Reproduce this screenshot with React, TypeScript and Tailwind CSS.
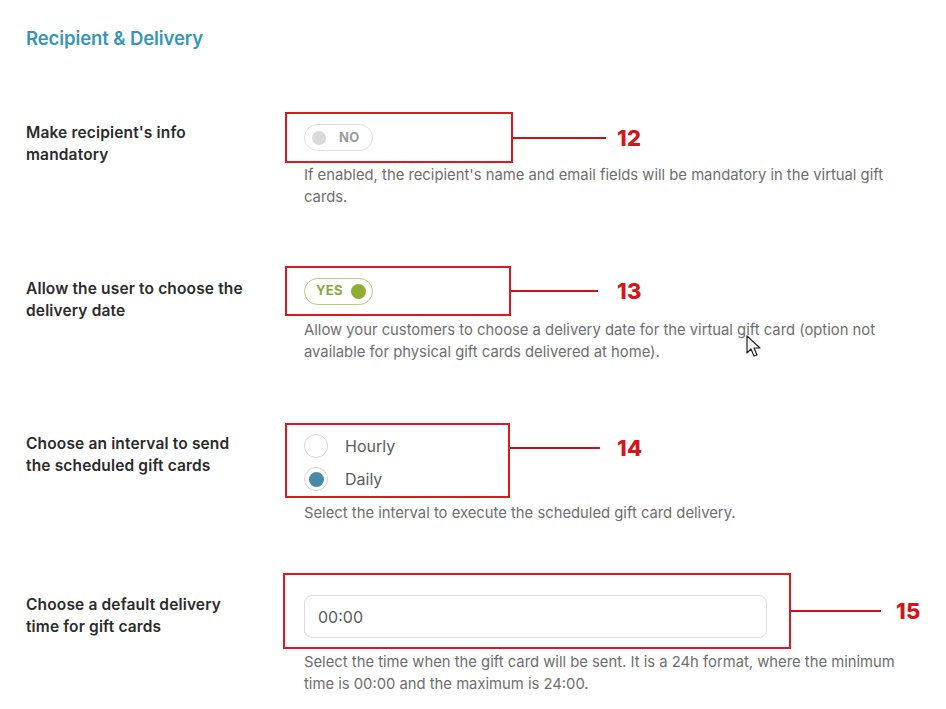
import React from "react";

const RED = "border-[#e1161e]";

function Callout({ n, lineW, gap, className = "" }: { n: string; lineW: number; gap: number; className?: string }) {
  return (
    <div className={`flex items-center ${className}`}>
      <div className="h-[2px] bg-[#c8101a]" style={{ width: lineW, marginRight: gap }} />
      <div className="text-[22px] font-extrabold text-[#d6141c] leading-none tracking-[0.3px]">{n}</div>
    </div>
  );
}

const LABEL = "text-[15.5px] font-semibold leading-[22px] text-[#2b2b2b] tracking-[0.15px]";
const DESC = "w-[600px] text-[14.8px] leading-[22px] text-[#6e6e6e]";

export default function App() {
  return (
    <div
      className="relative w-[946px] h-[709px] bg-white pl-[26px] pt-[26px] overflow-hidden"
      style={{ fontFamily: "Inter, 'Open Sans', sans-serif" }}
    >
      <h2 className="text-[18.5px] font-semibold leading-[24px] text-[#3596bd] tracking-[-0.1px]">
        Recipient &amp; Delivery
      </h2>

      {/* Row 1 */}
      <div className="flex mt-[62px]">
        <div className={`w-[259px] pt-[10px] ${LABEL}`}>
          Make recipient's info
          <br />
          mandatory
        </div>
        <div>
          <div className="flex items-center">
            <div className={`w-[228px] h-[51px] border-2 ${RED} flex items-center pl-[17px]`}>
              <div className="w-[69px] h-[27px] rounded-full border border-[#dedede] flex items-center pl-[7px] gap-[13px]">
                <div className="w-[14px] h-[14px] rounded-full bg-[#d9d9d9]" />
                <span className="text-[13px] font-bold text-[#9b9b9b] tracking-[0.3px]">NO</span>
              </div>
            </div>
            <Callout n="12" lineW={93} gap={11} />
          </div>
          <p className={`mt-[1px] ml-[19px] ${DESC}`}>
            If enabled, the recipient's name and email fields will be mandatory in the virtual gift cards.
          </p>
        </div>
      </div>

      {/* Row 2 */}
      <div className="flex mt-[58px]">
        <div className={`w-[259px] pt-[12px] ${LABEL}`}>
          Allow the user to choose the
          <br />
          delivery date
        </div>
        <div>
          <div className="flex items-center">
            <div className={`w-[226px] h-[50px] border-2 ${RED} flex items-center pl-[17px]`}>
              <div className="w-[69px] h-[27px] rounded-full border border-[#b5cd74] flex items-center pl-[11px] gap-[8px]">
                <span className="text-[13px] font-bold text-[#8aa83a] tracking-[0.3px]">YES</span>
                <div className="w-[15px] h-[15px] rounded-full bg-[#8fac33]" />
              </div>
            </div>
            <Callout n="13" lineW={87} gap={19} />
          </div>
          <p className={`mt-[3px] ml-[19px] ${DESC}`}>
            Allow your customers to choose a delivery date for the virtual gift card (option not available for physical gift cards delivered at home).
          </p>
        </div>
      </div>

      {/* Row 3 */}
      <div className="flex mt-[60px]">
        <div className={`w-[259px] pt-[10px] ${LABEL}`}>
          Choose an interval to send
          <br />
          the scheduled gift cards
        </div>
        <div>
          <div className="flex items-start">
            <div className={`w-[225px] h-[75px] border-2 ${RED} flex flex-col pt-[9px] pl-[17px] gap-[9px]`}>
              <div className="flex items-center gap-[17px]">
                <div className="w-[24px] h-[24px] rounded-full border border-[#d4d4d4] bg-white" />
                <span className="text-[16px] text-[#5c5c5c] leading-[24px]">Hourly</span>
              </div>
              <div className="flex items-center gap-[17px]">
                <div className="w-[24px] h-[24px] rounded-full border border-[#d4d4d4] bg-white flex items-center justify-center">
                  <div className="w-[15px] h-[15px] rounded-full bg-[#468aa8]" />
                </div>
                <span className="text-[16px] text-[#5c5c5c] leading-[24px]">Daily</span>
              </div>
            </div>
            <Callout n="14" lineW={90} gap={17} className="mt-[14px]" />
          </div>
          <p className={`mt-[4px] ml-[19px] ${DESC}`}>
            Select the interval to execute the scheduled gift card delivery.
          </p>
        </div>
      </div>

      {/* Row 4 */}
      <div className="flex mt-[49px]">
        <div className={`w-[257px] pt-[21px] ${LABEL}`}>
          Choose a default delivery
          <br />
          time for gift cards
        </div>
        <div>
          <div className="flex items-center">
            <div className={`w-[508px] h-[76px] border-2 ${RED} flex items-start pt-[20px] pl-[19px]`}>
              <div className="w-[463px] h-[43px] rounded-[8px] border border-[#dcdcdc] flex items-center pl-[13px] text-[16px] text-[#5a5a5a]">
                00:00
              </div>
            </div>
            <Callout n="15" lineW={90} gap={15} />
          </div>
          <p className={`mt-[2px] ml-[21px] ${DESC}`}>
            Select the time when the gift card will be sent. It is a 24h format, where the minimum time is 00:00 and the maximum is 24:00.
          </p>
        </div>
      </div>

      {/* cursor */}
      <svg className="absolute left-[746px] top-[335px]" width="16" height="23" viewBox="0 0 16 23">
        <path d="M1 1 L1 18 L5 14 L8 21 L11 20 L8 13 L14 13 Z" fill="white" stroke="#222" strokeWidth="1.2" strokeLinejoin="round" />
      </svg>
    </div>
  );
}
